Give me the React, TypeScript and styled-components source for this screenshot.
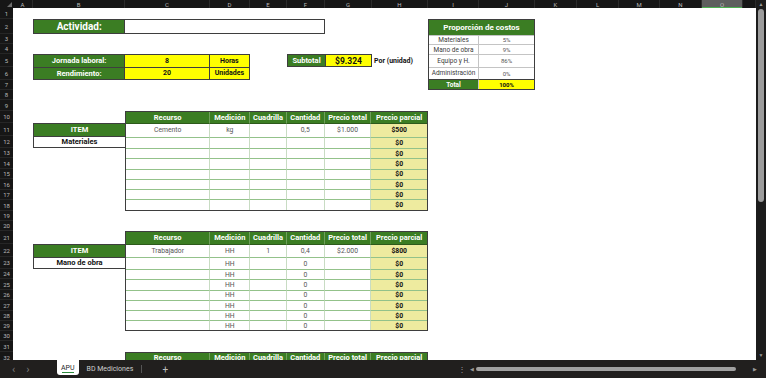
import React from 'react';
import styled, { createGlobalStyle, css } from 'styled-components';

const GlobalStyle = createGlobalStyle`
  html, body { margin: 0; padding: 0; background: #1f1f1f; }
  body { font-family: Roboto, "Liberation Sans", Arial, sans-serif; }
  * { box-sizing: border-box; }
`;

const GREEN = '#3b7d23';
const YELLOW = '#ffff00';
const PALE = '#eeeb9f';
const EDGE = '#3e3e3e';
const HLINE = '#93c28a';
const VLINE = '#c8dcc3';

const COLS = ['A', 'B', 'C', 'D', 'E', 'F', 'G', 'H', 'I', 'J', 'K', 'L', 'M', 'N', 'O'];
const COL_W = [20, 92, 85, 40, 37, 38, 47, 56, 51, 56, 42, 42, 41, 42, 41];
const ROW_H = [11, 15, 10, 10, 13, 13, 10, 10, 11, 12, 13, 12, 10, 11, 10, 11, 10, 11, 10, 10, 13, 13, 12, 10, 11, 10, 11, 10, 10, 10, 11, 12];

const px = (a: number[]) => a.map((v) => `${v}px`).join(' ');
const tracks = (a: number[]) => a.map((v) => `minmax(0, ${v}fr)`).join(' ');
const col = (letter: string) => COLS.indexOf(letter) + 2;
const row = (n: number) => n + 1;
const rowSlice = (from: number, to: number) => ROW_H.slice(from - 1, to);

type Place = { $col: number; $row: number; $cs?: number; $rs?: number };
const placed = css<Place>`
  grid-column: ${(p) => p.$col} / span ${(p) => p.$cs ?? 1};
  grid-row: ${(p) => p.$row} / span ${(p) => p.$rs ?? 1};
`;

const Frame = styled.div`
  width: 766px;
  height: 378px;
  display: flex;
  flex-direction: column;
  overflow: hidden;
  background: #1f1f1f;
`;

const Main = styled.div`
  display: flex;
  height: 360px;
`;

const Sheet = styled.div`
  flex: 1;
  height: 360px;
  overflow: hidden;
  display: grid;
  grid-template-columns: 13px ${px(COL_W)} 1fr;
  grid-template-rows: 8px ${px(ROW_H)};
  background: #ffffff;
`;

const Corner = styled.div`
  grid-column: 1;
  grid-row: 1;
  background: #161616;
  position: relative;
  &::after {
    content: '';
    position: absolute;
    right: 1px;
    bottom: 1px;
    border-left: 5px solid transparent;
    border-bottom: 5px solid #6d6d6d;
  }
`;

const ColHead = styled.div<{ $col: number; $sel?: boolean }>`
  grid-row: 1;
  grid-column: ${(p) => p.$col};
  background: ${(p) => (p.$sel ? '#5e5e5e' : '#161616')};
  color: #b8b8b8;
  font-size: 6px;
  display: flex;
  align-items: center;
  justify-content: center;
  border-right: 1px solid #2b2b2b;
  ${(p) => p.$sel && 'box-shadow: inset 0 -1px 0 #4caf50;'}
`;

const RowHead = styled.div<{ $row: number }>`
  grid-column: 1;
  grid-row: ${(p) => p.$row};
  background: #161616;
  color: #b8b8b8;
  font-size: 6px;
  display: flex;
  align-items: center;
  justify-content: center;
  border-bottom: 1px solid #262626;
`;

/* ---------- Actividad ---------- */
const ActivityBar = styled.div<Place>`
  ${placed}
  display: grid;
  grid-template-columns: 92fr 200fr;
  border: 1px solid ${EDGE};
`;
const ActivityLabel = styled.div`
  background: ${GREEN};
  color: #fff;
  font-weight: 700;
  font-size: 10px;
  display: flex;
  align-items: center;
  justify-content: center;
  border-right: 1px solid ${EDGE};
`;
const ActivityInput = styled.div`
  background: #fff;
`;

/* ---------- Parameters ---------- */
const ParamGrid = styled.div<Place>`
  ${placed}
  display: grid;
  grid-template-columns: ${tracks([92, 85, 40])};
  grid-template-rows: 1fr 1fr;
  gap: 1px;
  background: ${EDGE};
  border: 1px solid ${EDGE};
`;
const ParamLabel = styled.div`
  background: ${GREEN};
  color: #fff;
  font-weight: 700;
  font-size: 7.5px;
  display: flex;
  align-items: center;
  justify-content: center;
`;
const ParamValue = styled.div`
  background: ${YELLOW};
  color: #111;
  font-weight: 700;
  font-size: 7px;
  display: flex;
  align-items: center;
  justify-content: center;
`;

/* ---------- Subtotal ---------- */
const SubtotalRow = styled.div<Place>`
  ${placed}
  display: grid;
  grid-template-columns: 38px 47px 1fr;
  align-items: stretch;
`;
const SubtotalLabel = styled.div`
  background: ${GREEN};
  color: #fff;
  font-weight: 700;
  font-size: 7.5px;
  display: flex;
  align-items: center;
  justify-content: center;
  border: 1px solid ${EDGE};
  border-right: none;
`;
const SubtotalValue = styled.div`
  background: ${YELLOW};
  color: #111;
  font-weight: 700;
  font-size: 8.5px;
  display: flex;
  align-items: center;
  justify-content: center;
  border: 1px solid ${EDGE};
`;
const SubtotalNote = styled.div`
  color: #111;
  font-weight: 700;
  font-size: 7px;
  display: flex;
  align-items: center;
  padding-left: 2px;
  white-space: nowrap;
`;

/* ---------- Cost share ---------- */
const ShareGrid = styled.div<Place>`
  ${placed}
  display: grid;
  grid-template-columns: ${tracks([51, 56])};
  grid-template-rows: ${tracks(rowSlice(2, 7))};
  border: 1px solid ${EDGE};
  background: #fff;
`;
const ShareTitle = styled.div`
  grid-column: 1 / span 2;
  background: ${GREEN};
  color: #fff;
  font-weight: 700;
  font-size: 8px;
  display: flex;
  align-items: center;
  justify-content: center;
  white-space: nowrap;
`;
const ShareLabel = styled.div<{ $total?: boolean }>`
  background: ${(p) => (p.$total ? GREEN : '#fff')};
  color: ${(p) => (p.$total ? '#fff' : '#3a3a3a')};
  font-weight: ${(p) => (p.$total ? 700 : 400)};
  font-size: 6.5px;
  display: flex;
  align-items: center;
  justify-content: center;
  white-space: nowrap;
  border-right: 1px solid #c4c4c4;
  border-top: 1px solid ${(p) => (p.$total ? EDGE : '#c4c4c4')};
`;
const ShareValue = styled.div<{ $total?: boolean }>`
  background: ${(p) => (p.$total ? YELLOW : '#fff')};
  color: ${(p) => (p.$total ? '#111' : '#555')};
  font-weight: ${(p) => (p.$total ? 700 : 400)};
  font-size: 6px;
  display: flex;
  align-items: center;
  justify-content: center;
  border-top: 1px solid ${(p) => (p.$total ? EDGE : '#c4c4c4')};
`;

/* ---------- ITEM tag ---------- */
const ItemTag = styled.div<Place>`
  ${placed}
  display: grid;
  grid-template-rows: ${tracks([13, 12])};
  border: 1px solid ${EDGE};
  border-right: none;
`;
const ItemHead = styled.div`
  background: ${GREEN};
  color: #fff;
  font-weight: 700;
  font-size: 7.5px;
  display: flex;
  align-items: center;
  justify-content: center;
`;
const ItemName = styled.div`
  background: #fff;
  color: #111;
  font-weight: 700;
  font-size: 7.5px;
  display: flex;
  align-items: center;
  justify-content: center;
  border-top: 1px solid ${EDGE};
`;

/* ---------- Resource table ---------- */
const RES_W = [85, 40, 37, 38, 47, 56];
const HEAD = ['Recurso', 'Medición', 'Cuadrilla', 'Cantidad', 'Precio total', 'Precio parcial'];

const TableGrid = styled.div<Place & { $rows: string }>`
  ${placed}
  display: grid;
  grid-template-columns: ${tracks(RES_W)};
  grid-template-rows: ${(p) => p.$rows};
  border: 1px solid ${EDGE};
  background: #fff;
`;
const HeadCell = styled.div<{ $last?: boolean }>`
  background: ${GREEN};
  color: #fff;
  font-weight: 700;
  font-size: 7.5px;
  display: flex;
  align-items: center;
  justify-content: center;
  white-space: nowrap;
  overflow: hidden;
  border-right: ${(p) => (p.$last ? 'none' : '1px solid #6f9f5c')};
  border-bottom: 1px solid #2d5a1b;
`;
const DataCell = styled.div<{ $accent?: boolean; $last?: boolean; $first?: boolean }>`
  background: ${(p) => (p.$accent ? PALE : '#fff')};
  color: ${(p) => (p.$accent ? '#111' : '#555')};
  font-weight: ${(p) => (p.$accent ? 700 : 400)};
  font-size: 6.8px;
  display: flex;
  align-items: center;
  justify-content: center;
  white-space: nowrap;
  overflow: hidden;
  border-right: ${(p) => (p.$last ? 'none' : `1px solid ${VLINE}`)};
  border-top: ${(p) => (p.$first ? 'none' : `1px solid ${HLINE}`)};
`;

type Res = { r?: string; m?: string; c?: string; q?: string; t?: string; p?: string };

function ResourceTable({ $col, $row, heights, data }: { $col: number; $row: number; heights: number[]; data: Res[] }) {
  return (
    <TableGrid $col={$col} $row={$row} $cs={6} $rs={heights.length} $rows={tracks(heights)}>
      {HEAD.map((h, i) => (
        <HeadCell key={h} $last={i === HEAD.length - 1}>{h}</HeadCell>
      ))}
      {data.map((d, i) => (
        <React.Fragment key={i}>
          <DataCell $first={i === 0}>{d.r}</DataCell>
          <DataCell $first={i === 0}>{d.m}</DataCell>
          <DataCell $first={i === 0}>{d.c}</DataCell>
          <DataCell $first={i === 0}>{d.q}</DataCell>
          <DataCell $first={i === 0}>{d.t}</DataCell>
          <DataCell $first={i === 0} $accent $last>{d.p}</DataCell>
        </React.Fragment>
      ))}
    </TableGrid>
  );
}

const MATERIALS: Res[] = [
  { r: 'Cemento', m: 'kg', q: '0,5', t: '$1.000', p: '$500' },
  ...Array.from({ length: 7 }, () => ({ p: '$0' })),
];
const LABOR: Res[] = [
  { r: 'Trabajador', m: 'HH', c: '1', q: '0,4', t: '$2.000', p: '$800' },
  ...Array.from({ length: 7 }, () => ({ m: 'HH', q: '0', p: '$0' })),
];
const SHARES = [
  ['Materiales', '5%'],
  ['Mano de obra', '9%'],
  ['Equipo y H.', '86%'],
  ['Administración', '0%'],
];

/* ---------- Scrollbars & tabs ---------- */
const VScroll = styled.div`
  width: 10px;
  height: 360px;
  background: #1c1c1c;
  display: flex;
  flex-direction: column;
  align-items: center;
  padding: 1px 0 1px;
`;
const Arrow = styled.div`
  color: #9a9a9a;
  font-size: 5px;
  line-height: 7px;
  height: 7px;
`;
const VThumb = styled.div`
  width: 6px;
  height: 193px;
  margin-top: 1px;
  border-radius: 3px;
  background: #9c9c9c;
`;
const Grow = styled.div`
  flex: 1;
`;

const TabBar = styled.div`
  height: 18px;
  display: flex;
  align-items: flex-start;
  background: #211f1e;
  color: #c9c9c9;
  font-size: 7px;
`;
const NavArrows = styled.div`
  width: 57px;
  height: 18px;
  display: flex;
  align-items: center;
  gap: 11px;
  padding-left: 12px;
  color: #7c7c7c;
  font-size: 11px;
`;
const Tab = styled.div<{ $active?: boolean }>`
  height: ${(p) => (p.$active ? '15px' : '18px')};
  padding: 0 ${(p) => (p.$active ? '4px' : '8px')};
  display: flex;
  align-items: center;
  justify-content: center;
  position: relative;
  background: ${(p) => (p.$active ? '#ffffff' : 'transparent')};
  color: ${(p) => (p.$active ? '#1f1f1f' : '#cfcfcf')};
  border-radius: 0 0 3px 3px;
  ${(p) =>
    p.$active &&
    css`
      &::after {
        content: '';
        position: absolute;
        left: 5px;
        right: 5px;
        bottom: 2px;
        height: 1px;
        background: #2e8b3e;
      }
    `}
`;
const TabDivider = styled.div`
  width: 1px;
  height: 8px;
  margin-top: 5px;
  background: #555;
`;
const AddTab = styled.div`
  width: 46px;
  height: 18px;
  display: flex;
  align-items: center;
  justify-content: center;
  color: #bdbdbd;
  font-size: 10px;
`;
const Dots = styled.div`
  margin-left: auto;
  width: 12px;
  height: 18px;
  display: flex;
  align-items: center;
  justify-content: center;
  color: #9a9a9a;
  font-size: 8px;
`;
const HScroll = styled.div`
  width: 298px;
  height: 18px;
  display: flex;
  align-items: center;
  gap: 2px;
  padding: 0 9px 0 2px;
`;
const HArrow = styled.div`
  color: #9a9a9a;
  font-size: 5px;
`;
const HThumb = styled.div`
  width: 260px;
  height: 4px;
  border-radius: 2px;
  background: #a0a0a0;
`;

export default function App() {
  return (
    <>
      <GlobalStyle />
      <Frame>
        <Main>
          <Sheet>
            <Corner />
            {COLS.map((c) => (
              <ColHead key={c} $col={col(c)} $sel={c === 'O'}>
                {c}
              </ColHead>
            ))}
            <ColHead $col={17} />
            {ROW_H.map((_, i) => (
              <RowHead key={i} $row={row(i + 1)}>
                {i + 1}
              </RowHead>
            ))}

            <ActivityBar $col={col('B')} $row={row(2)} $cs={5}>
              <ActivityLabel>Actividad:</ActivityLabel>
              <ActivityInput />
            </ActivityBar>

            <ParamGrid $col={col('B')} $row={row(5)} $cs={3} $rs={2}>
              <ParamLabel>Jornada laboral:</ParamLabel>
              <ParamValue>8</ParamValue>
              <ParamValue>Horas</ParamValue>
              <ParamLabel>Rendimiento:</ParamLabel>
              <ParamValue>20</ParamValue>
              <ParamValue>Unidades</ParamValue>
            </ParamGrid>

            <SubtotalRow $col={col('F')} $row={row(5)} $cs={3}>
              <SubtotalLabel>Subtotal</SubtotalLabel>
              <SubtotalValue>$9.324</SubtotalValue>
              <SubtotalNote>Por (unidad)</SubtotalNote>
            </SubtotalRow>

            <ShareGrid $col={col('I')} $row={row(2)} $cs={2} $rs={6}>
              <ShareTitle>Proporción de costos</ShareTitle>
              {SHARES.map(([l, v]) => (
                <React.Fragment key={l}>
                  <ShareLabel>{l}</ShareLabel>
                  <ShareValue>{v}</ShareValue>
                </React.Fragment>
              ))}
              <ShareLabel $total>Total</ShareLabel>
              <ShareValue $total>100%</ShareValue>
            </ShareGrid>

            <ItemTag $col={col('B')} $row={row(11)} $rs={2}>
              <ItemHead>ITEM</ItemHead>
              <ItemName>Materiales</ItemName>
            </ItemTag>
            <ResourceTable $col={col('C')} $row={row(10)} heights={rowSlice(10, 18)} data={MATERIALS} />

            <ItemTag $col={col('B')} $row={row(22)} $rs={2}>
              <ItemHead>ITEM</ItemHead>
              <ItemName>Mano de obra</ItemName>
            </ItemTag>
            <ResourceTable $col={col('C')} $row={row(21)} heights={rowSlice(21, 29)} data={LABOR} />

            <ResourceTable $col={col('C')} $row={row(32)} heights={rowSlice(32, 32)} data={[]} />
          </Sheet>
          <VScroll>
            <Arrow>▲</Arrow>
            <VThumb />
            <Grow />
            <Arrow>▼</Arrow>
          </VScroll>
        </Main>
        <TabBar>
          <NavArrows>
            <span>‹</span>
            <span>›</span>
          </NavArrows>
          <Tab $active>APU</Tab>
          <Tab>BD Mediciones</Tab>
          <TabDivider />
          <AddTab>+</AddTab>
          <Dots>⋮</Dots>
          <HScroll>
            <HArrow>◀</HArrow>
            <HThumb />
            <Grow />
            <HArrow>▶</HArrow>
          </HScroll>
        </TabBar>
      </Frame>
    </>
  );
}
